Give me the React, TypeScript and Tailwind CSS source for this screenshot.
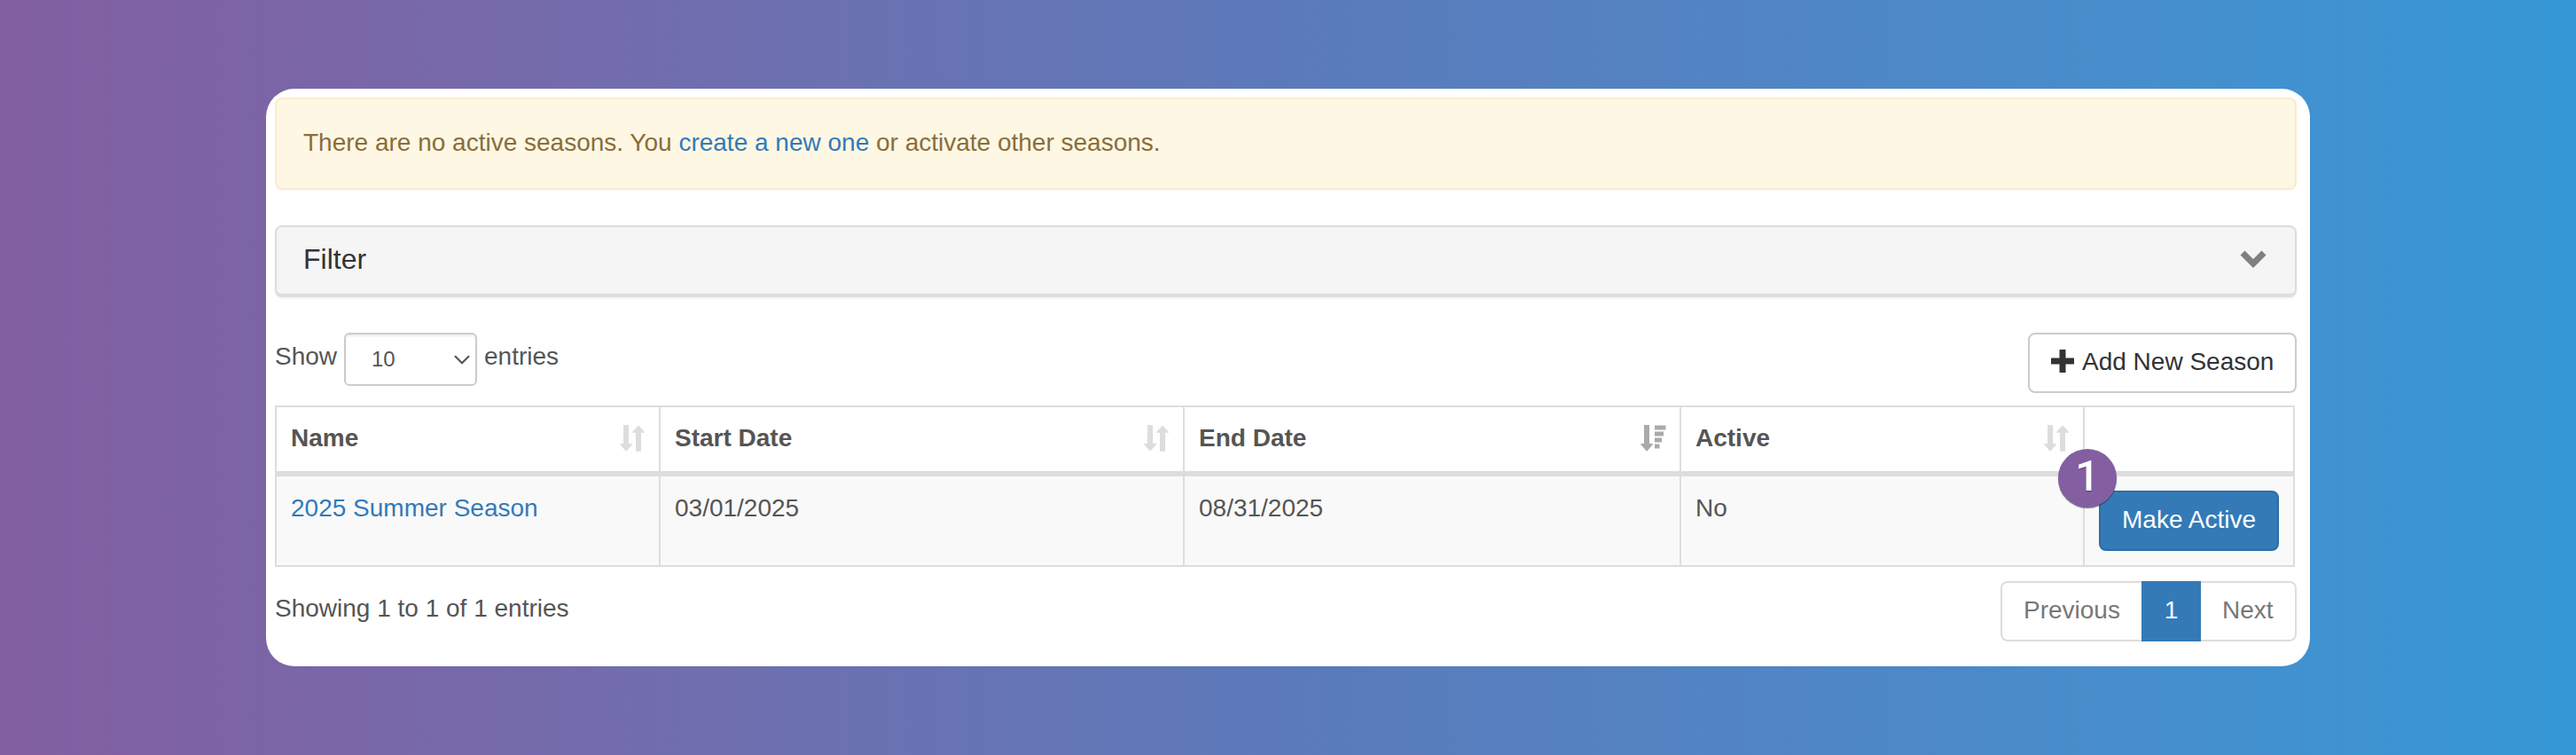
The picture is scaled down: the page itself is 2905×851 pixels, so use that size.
import React from "react";

function SortBoth() {
  return (
    <svg width="28" height="30" viewBox="0 0 28 30" fill="#ddd" className="mr-px shrink-0">
      <path d="M4 0h6v21h3.600q1 0 .3 1l-6 7q-.8.800-1.600 0l-6-7q-.6-1 .4-1H4z" />
      <path d="M18 29.700h6V8.700h3.500q1 0 .3-1l-6-6.500q-.8-.8-1.600 0l-6 6.500q-.6 1 .4 1H18z" />
    </svg>
  );
}

function SortDesc() {
  return (
    <svg width="29" height="30" viewBox="0 0 29 30" fill="#aaa" className="shrink-0">
      <path d="M4 0h6v21h3.600q1 0 .3 1l-6 7q-.8.800-1.600 0l-6-7q-.6-1 .4-1H4z" />
      <path d="M16 .5h12.500v5H16zM16 7.500h10v5H16zM16 14.500h8v5H16zM16 21.500h5.500v5H16z" />
    </svg>
  );
}

function Head({ label, sort, width }: { label?: string; sort?: "both" | "desc"; width: string }) {
  return (
    <th className={`${width} h-[78px] border-r-2 border-b-[6px] border-[#ddd] pl-4 pr-[15px] text-left align-top font-bold`}>
      {label && (
        <div className="flex items-start justify-between pt-[20px]">
          <span className="-mt-px leading-[32px]">{label}</span>
          {sort === "desc" ? <SortDesc /> : <SortBoth />}
        </div>
      )}
    </th>
  );
}

const cell = "h-[102px] border-r-2 border-b-2 border-[#ddd] pl-4 pt-[16px] align-top leading-[40px]";

export default function App() {
  return (
    <div className="h-[851px] w-[2905px] bg-linear-to-r from-[#825fa1] via-[#5b7aba] to-[#3598d6] pt-[100px] pl-[300px] font-['Liberation_Sans',Arial,sans-serif] text-[28px] text-[#555]">
      <main className="h-[651px] w-[2305px] rounded-[32px] bg-white pt-[10px] pr-[15px] pl-[10px]">
        <div className="h-[104px] rounded-lg border-2 border-[#faebcc] bg-[#fdf7e3] pt-[29px] pl-[30px] leading-[40px] text-[#8a6d3b]">
          There are no active seasons. You <a className="text-[#337ab7]">create a new one</a> or activate other seasons.
        </div>

        <div className="mt-[40px] flex h-[81px] items-start justify-between rounded-lg border-2 border-b-4 border-[#ddd] bg-[#f5f5f5] pr-[32px] pl-[30px] shadow-[0_2px_2px_rgba(0,0,0,0.05)]">
          <span className="pt-[14px] text-[32px] leading-[44px] text-[#333]">Filter</span>
          <svg width="30" height="20" viewBox="0 0 30 20" fill="#808080" className="mt-[26px]">
            <path d="M0.500 5.500 5.500 .5 15 10 24.500 .5 29.500 5.500 15 20z" />
          </svg>
        </div>

        <div className="mt-[40px] flex h-[82px] items-start justify-between">
          <div className="flex items-start">
            <span className="mt-[7px] w-[78px] leading-[40px]">Show</span>
            <div className="flex h-[60px] w-[150px] items-start justify-between rounded-md border-2 border-[#ccc] pr-[6px] pl-[29px] text-[24px] shadow-[inset_0_2px_2px_rgba(0,0,0,0.075)]">
              <span className="pt-[11px] leading-[34px]">10</span>
              <svg width="18" height="11" viewBox="0 0 18 11" fill="none" stroke="#555" strokeWidth="2.200" className="mt-[23px]">
                <path d="M1 1.200 9 9.200 17 1.200" />
              </svg>
            </div>
            <span className="mt-[7px] ml-2 leading-[40px]">entries</span>
          </div>
          <button className="flex h-[68px] w-[303px] items-start rounded-lg border-2 border-[#ccc] pt-[11px] pl-[24px] leading-[40px] text-[#333]">
            <svg width="26" height="26" viewBox="0 0 26 26" fill="#333" className="mt-[6px] mr-[9px]">
              <path d="M10 0h6q.5 0 .5.500V9.500H25.500q.5 0 .5.500v6q0 .5-.5.500H16.500V25.500q0 .5-.5.500h-6q-.5 0-.5-.5V16.500H.5Q0 16.500 0 16v-6q0-.5.5-.5H9.500V.5Q9.500 0 10 0z" />
            </svg>
            Add New Season
          </button>
        </div>

        <table className="w-[2278px] table-fixed border-separate border-spacing-0 border-t-2 border-l-2 border-[#ddd]">
          <thead>
            <tr>
              <Head label="Name" sort="both" width="w-[433px]" />
              <Head label="Start Date" sort="both" width="w-[591px]" />
              <Head label="End Date" sort="desc" width="w-[560px]" />
              <Head label="Active" sort="both" width="w-[455px]" />
              <Head width="w-[237px]" />
            </tr>
          </thead>
          <tbody>
            <tr className="bg-[#f9f9f9]">
              <td className={`${cell} text-[#337ab7]`}>2025 Summer Season</td>
              <td className={cell}>03/01/2025</td>
              <td className={cell}>08/31/2025</td>
              <td className={cell}>No</td>
              <td className="relative border-r-2 border-b-2 border-[#ddd] pt-[16px] pl-4 align-top">
                <button className="block h-[68px] w-[203px] rounded-lg border-2 border-[#2e6da4] bg-[#337ab7] pb-[2px] text-white">
                  Make Active
                </button>
                <span className="absolute top-[-31px] left-[-30px] flex size-[66px] justify-center rounded-full bg-[#835fa2] font-[Roboto,sans-serif] text-[49px] leading-[61px] font-medium text-white shadow-[0_1px_1px_rgba(0,0,0,0.5)] [text-shadow:0_1px_1px_rgba(0,0,0,0.4)]">
                  1
                </span>
              </td>
            </tr>
          </tbody>
        </table>

        <div className="mt-[16px] flex items-start justify-between">
          <span className="pt-[11px] leading-[40px]">Showing 1 to 1 of 1 entries</span>
          <nav className="flex h-[68px] w-[334px] leading-[40px] text-[#777]">
            <span className="w-[159px] rounded-l-lg border-2 border-r-0 border-[#ddd] pt-[11px] pl-[24px]">Previous</span>
            <span className="w-[67px] bg-[#337ab7] pt-[13px] text-center text-white">1</span>
            <span className="w-[108px] rounded-r-lg border-2 border-l-0 border-[#ddd] pt-[11px] pl-[24px]">Next</span>
          </nav>
        </div>
      </main>
    </div>
  );
}
